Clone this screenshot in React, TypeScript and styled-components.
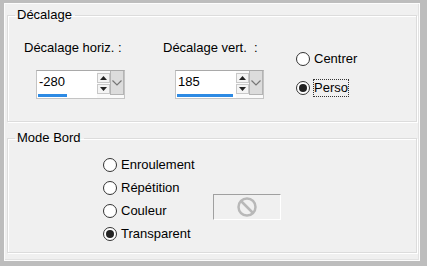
import React from 'react'
import styled, { createGlobalStyle } from 'styled-components'

const Global = createGlobalStyle`
    html, body {
        margin: 0;
        background: #bdbdbd;
    }
    body {
        width: 427px;
        height: 266px;
        overflow: hidden;
        font-family: 'Liberation Sans', Arial, sans-serif;
        font-size: 13px;
        color: #000;
    }
`

const Window = styled.div`
    box-sizing: border-box;
    margin: 3px 0 0 4px;
    width: 416px;
    height: 258px;
    background: #f0f0f0;
    border: 1px solid #fcfcfc;
    box-shadow: inset -1px -1px 0 #e2e2e2;
    padding: 4px 2px 0 2px;
    display: flex;
    flex-direction: column;
    gap: 9px;
`

const Group = styled.fieldset<{$height: number}>`
    box-sizing: border-box;
    margin: 0;
    height: ${p => p.$height}px;
    border: 1px solid #dcdcdc;
    box-shadow: inset 1px 1px 0 #fff, 1px 1px 0 #fff;
    padding: 0;
    min-width: 0;
`

const Legend = styled.legend`
    margin-left: 7px;
    padding: 0 3px 0 2px;
    font-size: 13px;
    line-height: 14px;
`

const OffsetRow = styled.div`
    display: flex;
    padding: 19px 0 0 16px;
`

const Field = styled.div<{$width: number}>`
    width: ${p => p.$width}px;
    display: flex;
    flex-direction: column;
    gap: 15px;
`

const Label = styled.div`
    line-height: 14px;
`

const Spin = styled.div`
    margin-left: 12px;
    width: 89px;
    height: 29px;
    box-sizing: border-box;
    border: 1px solid #c4c4c4;
    border-top-color: #a9a9a9;
    background: #fafafa;
    display: flex;
`

const SpinInput = styled.div`
    position: relative;
    width: 58px;
    background: #fff;
    padding: 3px 0 0 2px;
    font-size: 13px;
    line-height: 16px;
`

const Progress = styled.div`
    position: absolute;
    left: 1px;
    bottom: 1px;
    height: 3px;
    background: #2d8ae4;
`

const Arrows = styled.div`
    width: 13px;
    padding-top: 2px;
    display: flex;
    flex-direction: column;
    gap: 1px;
`

const ArrowBtn = styled.div`
    height: 10px;
    box-sizing: border-box;
    border: 1px solid #c8c8c8;
    background: #f4f4f4;
    display: flex;
    align-items: center;
    justify-content: center;
`

const Drop = styled.div`
    flex: 1;
    height: 24px;
    box-sizing: border-box;
    border: 1px solid #b4b4b4;
    border-top: none;
    background: #dcdcdc;
    display: flex;
    align-items: center;
    justify-content: center;
`

const RadioCol = styled.div<{$gap: number, $top?: number}>`
    display: flex;
    flex-direction: column;
    gap: ${p => p.$gap}px;
    margin-top: ${p => p.$top || 0}px;
`

const RadioRow = styled.div<{$width?: number}>`
    display: flex;
    align-items: center;
    gap: 4px;
    height: 18px;
    width: ${p => p.$width ? p.$width + 'px' : 'auto'};
`

const Circle = styled.span<{$on: boolean}>`
    box-sizing: border-box;
    width: 14px;
    height: 14px;
    border-radius: 50%;
    border: 1px solid #333;
    background: #fff;
    display: flex;
    align-items: center;
    justify-content: center;

    &::after {
        content: '';
        width: 8px;
        height: 8px;
        border-radius: 50%;
        background: ${p => p.$on ? '#222' : 'transparent'};
    }
`

const RadioText = styled.span<{$focus?: boolean}>`
    outline: ${p => p.$focus ? '1px dotted #333' : 'none'};
    padding: 1px 0;
    line-height: 14px;
`

const BordRow = styled.div`
    padding: 11px 0 0 95px;
`

const ColorRow = styled.div`
    display: flex;
    align-items: flex-start;
    height: 18px;
`

const ColorBtn = styled.div`
    box-sizing: border-box;
    flex: none;
    width: 68px;
    height: 26px;
    margin-top: -8px;
    border: 1px solid #fff;
    border-top-color: #a0a0a0;
    border-left-color: #a0a0a0;
    display: flex;
    align-items: center;
    justify-content: center;
`

const Radio = ({label, on, focus, width}: {label: string, on?: boolean, focus?: boolean, width?: number}) => (
    <RadioRow $width={width}>
        <Circle $on={!!on} />
        <RadioText $focus={focus}>{label}</RadioText>
    </RadioRow>
)

const SpinBox = ({value, ratio}: {value: string, ratio: number}) => (
    <Spin>
        <SpinInput>
            {value}
            <Progress style={{width: `${ratio * 56}px`}} />
        </SpinInput>
        <Arrows>
            <ArrowBtn>
                <svg width="7" height="4" viewBox="0 0 7 4"><path d="M0 4 L3.5 0 L7 4Z" fill="#222" /></svg>
            </ArrowBtn>
            <ArrowBtn>
                <svg width="7" height="4" viewBox="0 0 7 4"><path d="M0 0 L3.5 4 L7 0Z" fill="#222" /></svg>
            </ArrowBtn>
        </Arrows>
        <Drop>
            <svg width="10" height="6" viewBox="0 0 10 6"><path d="M0.5 0.5 L5 5 L9.5 0.5" fill="none" stroke="#777" strokeWidth="1.2" /></svg>
        </Drop>
    </Spin>
)

const App = () => {
    return (
        <>
            <Global />
            <Window>
                <Group $height={114}>
                    <Legend>Décalage</Legend>
                    <OffsetRow>
                        <Field $width={139}>
                            <Label>Décalage horiz. :</Label>
                            <SpinBox value="-280" ratio={0.52} />
                        </Field>
                        <Field $width={133}>
                            <Label>Décalage vert. &nbsp;:</Label>
                            <SpinBox value="185" ratio={1} />
                        </Field>
                        <RadioCol $gap={11} $top={9}>
                            <Radio label="Centrer" />
                            <Radio label="Perso" on focus />
                        </RadioCol>
                    </OffsetRow>
                </Group>
                <Group $height={122}>
                    <Legend>Mode Bord</Legend>
                    <BordRow>
                        <RadioCol $gap={5}>
                            <Radio label="Enroulement" />
                            <Radio label="Répétition" />
                            <ColorRow>
                                <Radio label="Couleur" width={110} />
                                <ColorBtn>
                                    <svg width="22" height="22" viewBox="0 0 22 22">
                                        <circle cx="11" cy="11" r="8.5" fill="none" stroke="#b8b8b8" strokeWidth="2.5" />
                                        <path d="M5 5 L17 17" stroke="#b8b8b8" strokeWidth="2.5" />
                                    </svg>
                                </ColorBtn>
                            </ColorRow>
                            <Radio label="Transparent" on />
                        </RadioCol>
                    </BordRow>
                </Group>
            </Window>
        </>
    )
}

export default App
